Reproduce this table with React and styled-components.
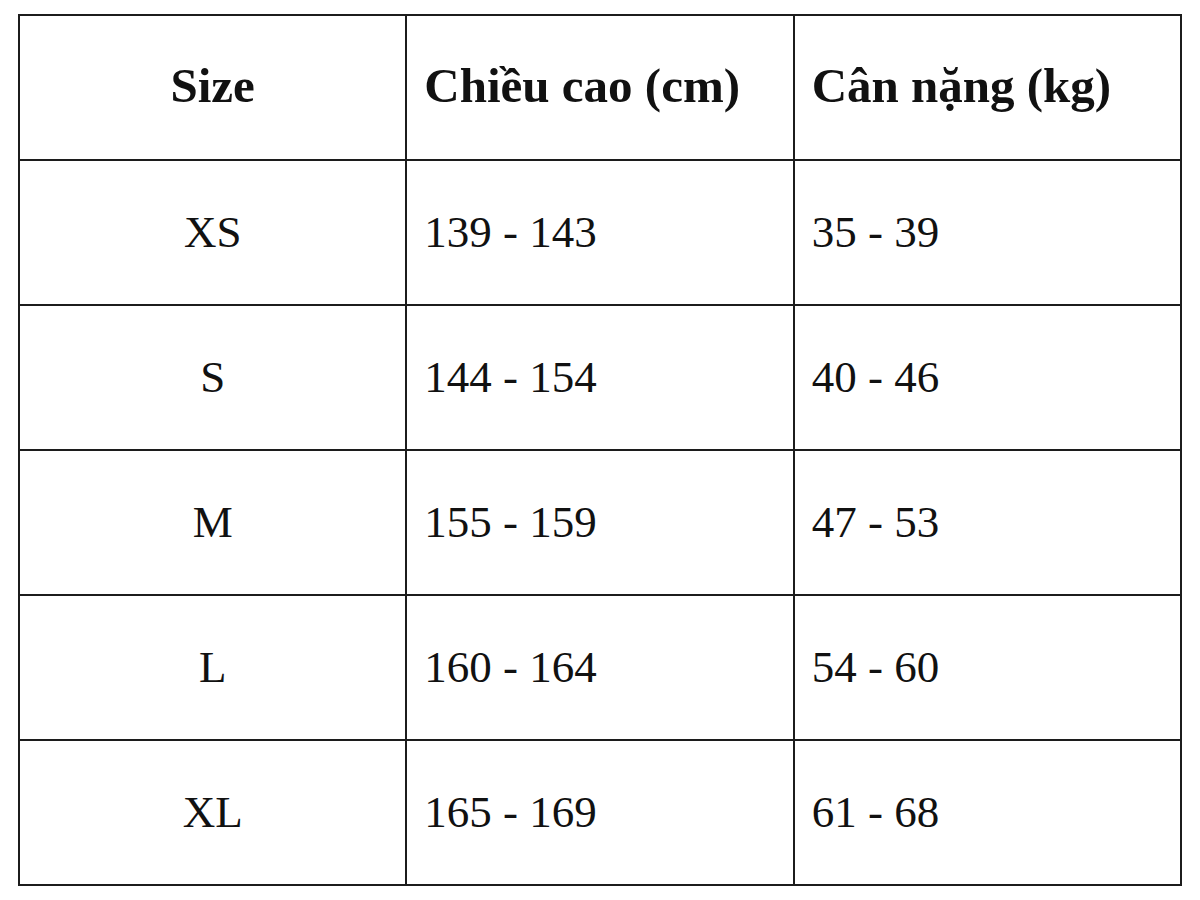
import styled, { createGlobalStyle } from 'styled-components';

const GlobalStyle = createGlobalStyle`
  html, body {
    margin: 0;
    padding: 0;
    background: #ffffff;
  }
`;

const Page = styled.div`
  padding: 14px 18px;
  font-family: 'Liberation Serif', 'DejaVu Serif', serif;
  color: #111111;
`;

const Table = styled.table`
  width: 1164px;
  border-collapse: collapse;
  table-layout: fixed;
`;

const Th = styled.th`
  height: 139px;
  padding: 0 17px 4px;
  border: 2px solid #1c1c1c;
  font-size: 49px;
  font-weight: 700;
  text-align: ${props => (props.center ? 'center' : 'left')};
  vertical-align: middle;
`;

const Td = styled.td`
  height: 141px;
  padding: 0 17px 2px;
  border: 2px solid #1c1c1c;
  font-size: 45px;
  font-weight: 400;
  text-align: ${props => (props.center ? 'center' : 'left')};
  vertical-align: middle;
`;

const rows = [
  { size: 'XS', height: '139 - 143', weight: '35 - 39' },
  { size: 'S', height: '144 - 154', weight: '40 - 46' },
  { size: 'M', height: '155 - 159', weight: '47 - 53' },
  { size: 'L', height: '160 - 164', weight: '54 - 60' },
  { size: 'XL', height: '165 - 169', weight: '61 - 68' },
];

export default function App() {
  return (
    <Page>
      <GlobalStyle />
      <Table>
        <thead>
          <tr>
            <Th center>Size</Th>
            <Th>Chiều cao (cm)</Th>
            <Th>Cân nặng (kg)</Th>
          </tr>
        </thead>
        <tbody>
          {rows.map(row => (
            <tr key={row.size}>
              <Td center>{row.size}</Td>
              <Td>{row.height}</Td>
              <Td>{row.weight}</Td>
            </tr>
          ))}
        </tbody>
      </Table>
    </Page>
  );
}
